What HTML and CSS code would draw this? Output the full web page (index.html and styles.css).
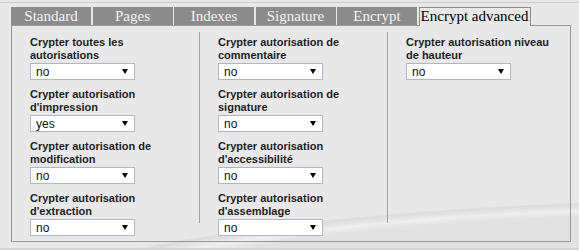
FILE: index.html
```html
<!DOCTYPE html>
<html>
<head><title>Encrypt advanced</title><meta charset="UTF-8">
    <link rel="stylesheet" href="styles.css">
</head>
<body>
  <div class="topline"></div>
  <div class="tabs">
    <div class="tab">Standard</div>
    <div class="tab">Pages</div>
    <div class="tab">Indexes</div>
    <div class="tab">Signature</div>
    <div class="tab">Encrypt</div>
    <div class="tab active">Encrypt advanced</div>
  </div>

  <div class="panel">
    <div class="col">
      <div class="field">
        <label>Crypter toutes les autorisations</label>
        <span class="sel"><select><option>no</option><option>yes</option></select></span>
      </div>
      <div class="field">
        <label>Crypter autorisation d'impression</label>
        <span class="sel"><select><option>yes</option><option>no</option></select></span>
      </div>
      <div class="field">
        <label>Crypter autorisation de modification</label>
        <span class="sel"><select><option>no</option><option>yes</option></select></span>
      </div>
      <div class="field">
        <label>Crypter autorisation d'extraction</label>
        <span class="sel"><select><option>no</option><option>yes</option></select></span>
      </div>
    </div>
    <div class="divider"></div>
    <div class="col">
      <div class="field">
        <label>Crypter autorisation de commentaire</label>
        <span class="sel"><select><option>no</option><option>yes</option></select></span>
      </div>
      <div class="field">
        <label>Crypter autorisation de signature</label>
        <span class="sel"><select><option>no</option><option>yes</option></select></span>
      </div>
      <div class="field">
        <label>Crypter autorisation d'accessibilité</label>
        <span class="sel"><select><option>no</option><option>yes</option></select></span>
      </div>
      <div class="field">
        <label>Crypter autorisation d'assemblage</label>
        <span class="sel"><select><option>no</option><option>yes</option></select></span>
      </div>
    </div>
    <div class="divider"></div>
    <div class="col">
      <div class="field">
        <label>Crypter autorisation niveau de hauteur</label>
        <span class="sel"><select><option>no</option><option>yes</option></select></span>
      </div>
    </div>
  </div>
  <div class="bottomline"></div>
</body>
</html>
```

FILE: styles.css
```css
body {
  margin: 0;
  height: 250px;
  overflow: hidden;
  font-family: "Liberation Sans", Arial, sans-serif;
  background:
    radial-gradient(ellipse 840px 170px at 720px 370px,
      #e2e2e3 0%, #e2e2e3 92%, #efefef 95%, #e4e4e4 97%, #dcdcdd 99%, #e8e8e9 100%),
    #e8e8e9;
}
.topline { height: 1px; margin-top: 2px; background: #cdcdcd; }

.tabs {
  display: flex;
  gap: 1.5px;
  padding: 4px 0 0 11px;
}
.tab {
  width: 80px;
  height: 18px;
  line-height: 18px;
  text-align: center;
  background: #8b8b8b;
  color: #f4f4f4;
  font-family: "Liberation Serif", "Times New Roman", serif;
  font-size: 15px;
}
.tab.active {
  width: 112px;
  box-sizing: border-box;
  height: 19px;
  margin-bottom: -1px;
  background: #e8e8e9;
  color: #000;
  border: 1px solid #8d8d8d;
  border-bottom: none;
  line-height: 17px;
  position: relative;
  z-index: 1;
}

.panel {
  display: flex;
  align-items: flex-start;
  width: 560px;
  box-sizing: border-box;
  margin-left: 11px;
  padding: 10px 0 5px 0;
  border: 1px solid #999;
}
.col {
  width: 187px;
  box-sizing: border-box;
  padding-left: 18px;
}
.col:last-child { width: auto; flex: 1; }
.divider {
  width: 1px;
  height: 191px;
  margin-top: -4px;
  background: #a3a3a3;
}
.field { margin-bottom: 8px; }
.field:last-child { margin-bottom: 0; }
.field label {
  display: block;
  width: 150px;
  font-size: 11px;
  font-weight: bold;
  line-height: 13px;
  color: #1e1e1e;
  margin-bottom: 1px;
}
.sel {
  display: block;
  position: relative;
  width: 105px;
}
.sel select {
  appearance: none;
  -webkit-appearance: none;
  display: block;
  width: 105px;
  height: 17px;
  box-sizing: border-box;
  padding: 0 0 0 5px;
  margin: 0;
  border: 1px solid #a9b8cf;
  border-radius: 0;
  background: #fff;
  font-family: "Liberation Sans", Arial, sans-serif;
  font-size: 12px;
  color: #111;
}
.sel::after {
  content: "";
  position: absolute;
  right: 7px;
  top: 6px;
  border-left: 3.5px solid transparent;
  border-right: 3.5px solid transparent;
  border-top: 5px solid #000;
  pointer-events: none;
}
.bottomline { height: 4px; margin-top: 6px; background: #d5d5d5; }
```
